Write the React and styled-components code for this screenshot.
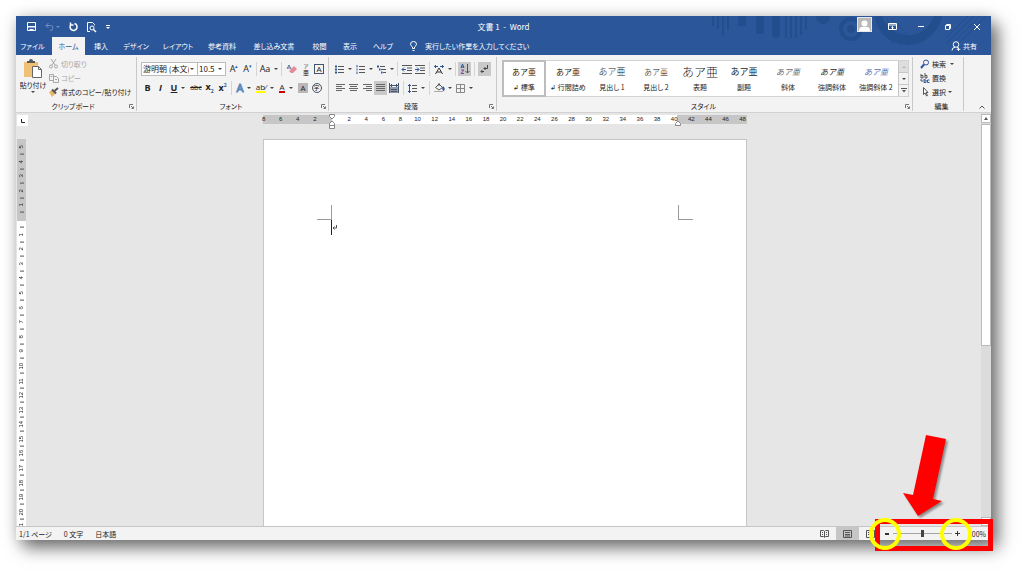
import React from "react";
import styled, { createGlobalStyle, css } from "styled-components";

const GlobalStyle = createGlobalStyle`
  * { box-sizing: border-box; }
  body { margin: 0; background: #fff; }
  button, input, select { font: inherit; color: inherit; margin: 0; padding: 0; border: 0; background: none; }
  svg { display: block; flex: none; overflow: visible; }
`;

const Stage = styled.div`
  min-height: 100vh;
  padding: 16px 33px 33px 16px;
  display: flex;
  overflow: hidden;
  font: 7px/10px "Noto Sans CJK JP", "Noto Sans", sans-serif;
  font-feature-settings: "palt";
  color: #222;
  -webkit-font-smoothing: antialiased;
`;
const Win = styled.div`
  position: relative;
  flex: 1;
  min-width: 0;
  display: flex;
  flex-direction: column;
  background: #e6e6e6;
  box-shadow: 7px 8px 16px rgba(0, 0, 0, 0.55), 0 0 14px rgba(0, 0, 0, 0.14);
`;

/* header */
const Header = styled.header`
  position: relative;
  background: #2b579a;
  color: #fff;
`;
const Decor = styled.div`
  position: absolute;
  inset: 0;
  overflow: hidden;
  display: flex;
  justify-content: flex-end;
`;
const TitleBar = styled.div`
  position: relative;
  display: grid;
  grid-template-columns: 1fr auto 1fr;
  align-items: center;
  height: 21px;
`;
const Quick = styled.div`
  display: flex;
  align-items: center;
  gap: 9px;
  padding-left: 11px;
`;
const Title = styled.h1`
  margin: 0;
  font-size: 8px;
  font-weight: 400;
  white-space: nowrap;
`;
const WinButtons = styled.div`
  display: flex;
  justify-content: flex-end;
  align-items: center;
`;
const PlainButton = styled.button`
  display: flex;
  align-items: center;
  justify-content: center;
  gap: 2px;
  width: ${(p) => (p.$w ? p.$w + "px" : "auto")};
  white-space: nowrap;
`;
const Percent = styled(PlainButton)`
  width: 25px;
  justify-content: flex-end;
`;
const Avatar = styled.button`
  width: 15px;
  height: 15px;
  background: #b9b9b9;
  border: 1px solid #e8e8e8;
  display: flex;
  justify-content: center;
  align-items: flex-end;
  margin: -4px 3px 0 0;
`;
const TabBar = styled.nav`
  position: relative;
  display: flex;
  align-items: stretch;
  height: 18px;
`;
const Tab = styled.button`
  width: ${(p) => p.$w}px;
  white-space: nowrap;
  ${(p) => p.$first && css`margin-right: 3px;`}
  ${(p) => p.$active && css`background: #f3f3f3; color: #2b579a;`}
`;
const Tell = styled.label`
  display: flex;
  align-items: center;
  gap: 8px;
  padding-left: 10px;
  flex: 1;
  input { width: 160px; outline: 0; }
  input::placeholder { color: #fff; opacity: 1; }
`;
const Share = styled(PlainButton)`
  padding-right: 14px;
`;

/* ribbon */
const Ribbon = styled.div`
  display: flex;
  height: 58px;
  background: #f3f3f3;
  border-bottom: 1px solid #d2d2d2;
`;
const Group = styled.section`
  display: flex;
  flex-direction: column;
  margin: 2px 0 1px;
  padding: ${(p) => p.$pad || "0 2px 0 4px"};
  border-right: 1px solid #c8c8c8;
  ${(p) => (p.$w ? css`width: ${p.$w}px; flex: none;` : css`flex: 1; min-width: 0;`)}
`;
const GroupBody = styled.div`
  height: 44px;
  display: flex;
  flex-direction: ${(p) => (p.$rows ? "column" : "row")};
  padding-top: ${(p) => (p.$rows ? "5px" : "0")};
  gap: ${(p) => (p.$rows ? "5px" : "0")};
`;
const GroupLabel = styled.div`
  display: flex;
  align-items: center;
  height: 10px;
  span { flex: 1; text-align: center; }
`;
const Paste = styled.button`
  display: flex;
  flex-direction: column;
  align-items: center;
  gap: 1px;
  width: 32px;
  padding-top: 2px;
  white-space: nowrap;
`;
const List = styled.div`
  display: flex;
  flex-direction: column;
  align-items: flex-start;
`;
const ListItem = styled.button`
  display: flex;
  align-items: center;
  gap: 2px;
  height: 14px;
  white-space: nowrap;
  color: ${(p) => (p.$off ? "#a6a6a6" : "#222")};
`;
const ToolRow = styled.div`
  display: flex;
  align-items: center;
  height: 14px;
`;
const Tool = styled.button`
  display: flex;
  align-items: center;
  justify-content: center;
  gap: 4px;
  flex: none;
  width: ${(p) => p.$w || 13}px;
  height: 14px;
  font-size: 9px;
  font-family: "Open Sans", "Noto Sans", sans-serif;
  font-weight: ${(p) => (p.$bold ? 700 : 400)};
  font-style: ${(p) => (p.$italic ? "italic" : "normal")};
  background: ${(p) => (p.$on ? "#c9c9c9" : "transparent")};
  sup, sub { font-size: 5px; line-height: 5px; color: #2b579a; }
  u { text-underline-offset: 1px; }
  s { font-size: 7px; }
`;
const Sep = styled.i`
  flex: none;
  width: 1px;
  height: 14px;
  margin: 0 ${(p) => p.$m || 2}px;
  background: #d4d4d4;
`;
const Combo = styled.label`
  position: relative;
  display: flex;
  width: ${(p) => p.$w}px;
  height: 14px;
  border: 1px solid #bcbcbc;
  margin-right: ${(p) => (p.$last ? 1 : -1)}px;
  background: #fff;
  font-size: 8px;
  select { appearance: none; flex: 1; min-width: 0; outline: 0; padding: 0 8px 0 1px; overflow: hidden; }
  svg { position: absolute; right: 3px; top: 5px; }
`;
const Boxed = styled.span`
  width: 10px;
  height: 10px;
  line-height: 8px;
  font-size: 8px;
  text-align: center;
  border: 1px solid ${(p) => (p.$fill ? "#b8b8b8" : "#44546a")};
  background: ${(p) => (p.$fill ? "#b8b8b8" : "transparent")};
  border-radius: ${(p) => (p.$round ? "5px" : "0")};
  ${(p) => p.$round && css`font: 6px/8px "Noto Sans CJK JP", sans-serif;`}
`;
const Ink = styled.span`
  line-height: 8px;
  height: 10px;
  font-size: 8px;
  border-bottom: 2px solid ${(p) => p.$c};
`;
const OutlineA = styled.span`
  color: #fff;
  font-size: 11px;
  -webkit-text-stroke: 1px #5b87bd;
`;
const Ruby = styled.span`
  display: flex;
  flex-direction: column;
  align-items: center;
  font: 5px/6px "Noto Sans CJK JP", sans-serif;
  b { font-size: 6px; line-height: 7px; font-weight: 400; }
`;

const Gallery = styled.div`
  display: flex;
  height: 37px;
  margin-top: 3px;
  background: #fff;
  border: 1px solid #d2d2d2;
  border-left: 0;
  width: max-content;
`;
const StyleCard = styled.button`
  width: 44px;
  display: flex;
  flex-direction: column;
  align-items: center;
  justify-content: flex-end;
  padding-bottom: ${(p) => (p.$on ? 3 : 4)}px;
  margin: ${(p) => (p.$on ? "-1px 0" : "0")};
  border: ${(p) => (p.$on ? "2px solid #bdbdbd" : "0")};
  white-space: nowrap;
`;
const Sample = styled.span`
  font-size: ${(p) => p.$size || 8}px;
  line-height: 20px;
  font-weight: ${(p) => p.$weight || 400};
  font-style: ${(p) => (p.$italic ? "italic" : "normal")};
  color: ${(p) => p.$color || "#222"};
  font-feature-settings: normal;
`;
const Steps = styled.div`
  display: flex;
  flex-direction: column;
  width: 10px;
  border-left: 1px solid #c6c6c6;
  button { flex: 1; display: grid; place-items: center; background: #f3f3f3; }
  button + button { border-top: 1px solid #c6c6c6; }
  button:first-child { background: #dedede; }
`;
const Collapse = styled.div`
  width: 27px;
  display: flex;
  justify-content: center;
  align-items: flex-end;
  padding: 0 0 3px 9px;
`;

/* workspace */
const Work = styled.main`
  flex: 1;
  min-height: 0;
  display: flex;
`;
const LeftRail = styled.div`
  width: 12px;
  height: 0;
  min-height: 100%;
  overflow: hidden;
  padding: 2px 0 0 1px;
`;
const TabStop = styled.button`
  width: 11px;
  height: 11px;
  display: grid;
  place-items: center;
  background: #fff;
  margin-bottom: 13px;
`;
const VRuler = styled.div`
  width: 9px;
  height: 395px;
  padding-top: 1px;
  display: flex;
  flex-direction: column;
  background: linear-gradient(#c6c6c6 82px, #fff 82px);
`;
const VCell = styled.span`
  flex: 1;
  position: relative;
  display: flex;
  align-items: center;
  justify-content: center;
  writing-mode: vertical-rl;
  transform: rotate(180deg);
  font: 6px/9px "Liberation Sans", sans-serif;
  &::before {
    content: "";
    position: absolute;
    top: 0;
    left: 2px;
    width: 4px;
    height: 1px;
    background: #555;
  }
`;
const Canvas = styled.div`
  flex: 1;
  min-width: 0;
  height: 0;
  min-height: 100%;
  overflow: hidden;
  display: flex;
  flex-direction: column;
  align-items: center;
`;
const HRuler = styled.div`
  position: relative;
  flex: none;
  display: flex;
  width: 496px;
  height: 9px;
  margin: 2px 3px 15px 0;
  background: linear-gradient(90deg, transparent 8px, #c6c6c6 8px 77px, #fff 77px 422px, #c6c6c6 422px 492px, transparent 492px);
`;
const HCell = styled.span`
  flex: 1;
  display: flex;
  justify-content: center;
  font: 6px/9px "Liberation Sans", sans-serif;
`;
const Marker = styled.svg`
  position: absolute;
  top: -1px;
  left: ${(p) => p.$x}px;
`;
const Page = styled.article`
  flex: 1 0 auto;
  width: 484px;
  margin-left: 1px;
  padding: 65px 53px 0;
  background: #fff;
  border: 1px solid #c6c6c6;
  border-bottom: 0;
`;
const Marks = styled.div`
  display: flex;
  justify-content: space-between;
`;
const Corner = styled.i`
  width: 15px;
  height: 15px;
  border-bottom: 1px solid #9a9a9a;
  ${(p) => (p.$side === "left" ? css`border-right: 1px solid #9a9a9a;` : css`border-left: 1px solid #9a9a9a;`)}
`;
const Caret = styled.p`
  margin: 0 0 0 14px;
  height: 15px;
  border-left: 1px solid #222;
  padding: 5px 0 0 1px;
`;
const Scroll = styled.div`
  width: 10px;
  display: flex;
  flex-direction: column;
  padding: 1px 0 0;
  background: #dcdcdc;
  button { height: 9px; display: grid; place-items: center; background: #fff; border: 1px solid #bbb; }
`;
const Thumb = styled.div`
  height: 222px;
  margin: 1px 0 auto;
  background: #fff;
  border: 1px solid #bbb;
`;

/* status bar */
const Status = styled.footer`
  display: flex;
  align-items: center;
  height: 14px;
  padding: 0 5px 0 3px;
  background: #f3f3f3;
  border-top: 1px solid #c6c6c6;
  white-space: nowrap;
`;
const StatusInfo = styled.div`
  flex: 1;
  display: flex;
  gap: 12px;
`;
const View = styled.button`
  width: 23px;
  height: 13px;
  display: grid;
  place-items: center;
  background: ${(p) => (p.$on ? "#c6c6c6" : "transparent")};
`;
const Zoom = styled.div`
  display: flex;
  align-items: center;
  input {
    appearance: none;
    width: 59px;
    height: 9px;
    margin: 0 1px;
    background: linear-gradient(#a6a6a6, #a6a6a6) center / 100% 1px no-repeat;
  }
  input::-webkit-slider-thumb { appearance: none; width: 3px; height: 7px; background: #444; }
`;
const Callout = styled.svg`
  position: absolute;
  right: -2px;
  bottom: -11px;
  pointer-events: none;
`;

const Down = ({ c = "#444" }) => (
  <svg width="4" height="2" viewBox="0 0 4 2"><path d="M0 0h4L2 2z" fill={c} /></svg>
);
const Icon = ({ s = 10, w, children, c = "#555" }) => (
  <svg width={w || s} height={s} viewBox={`0 0 ${w || s} ${s}`} fill="none" stroke={c} strokeWidth="1">{children}</svg>
);
const Launcher = () => (
  <PlainButton aria-label="詳細">
    <Icon s={5} c="#777"><path d="M.5 4V.5H4M2 2l2.500 2.500M4.500 2.500v2h-2" /></Icon>
  </PlainButton>
);
const Lines = ({ rows }) => (
  <Icon w={9} s={8} c="#666">
    {rows.map(([a, b], i) => <path key={i} d={`M${a} ${i * 2 + 0.5}H${b}`} />)}
  </Icon>
);

const TABS = [
  ["ファイル", 33], ["ホーム", 33], ["挿入", 32], ["デザイン", 38], ["レイアウト", 46],
  ["参考資料", 42], ["差し込み文書", 62], ["校閲", 29], ["表示", 32], ["ヘルプ", 34],
];
const STYLES = [
  { name: "↲ 標準" },
  { name: "↲ 行間詰め" },
  { name: "見出し 1", size: 9, weight: 300 },
  { name: "見出し 2", weight: 300 },
  { name: "表題", size: 12, weight: 300 },
  { name: "副題", size: 9 },
  { name: "斜体", italic: true, color: "#666" },
  { name: "強調斜体", italic: true },
  { name: "強調斜体 2", italic: true, color: "#5470b0" },
];
const H_NUMS = [8, 6, 4, 2, "", ...Array.from({ length: 24 }, (_, i) => i * 2 + 2)];
const V_NUMS = [5, 4, 3, 2, 1, "", ...Array.from({ length: 21 }, (_, i) => i + 1)];

function TitleDecor() {
  return (
    <Decor>
      <svg width="285" height="39" viewBox="0 0 285 39" fill="none" stroke="#234e8e">
        <path strokeWidth="2" d="M7 0v10M12 0v13M17 0v20M22 0v14" />
        <path strokeWidth="8" d="M36 0v10M54 0v18" />
        <path strokeWidth="8" strokeLinecap="round" d="M36 0v6M54 0v14M70 0v18" />
        <path strokeWidth="2" d="M80 0v22M85 0v22M90 0v22M95 0v19M100 0v14" />
        <circle cx="117" cy="1" r="7" fill="#234e8e" stroke="none" />
        <circle cx="145" cy="13" r="10" strokeWidth="4" />
        <circle cx="145" cy="13" r="4" fill="#234e8e" stroke="none" />
        <path strokeWidth="8" d="M172 0a31 31 0 0 0 60 0" />
        <path strokeWidth="8" d="M178 14a31 31 0 0 0 54-14" />
        <path strokeWidth="1" d="M166 6l22 22M170 4l26 26M175 3l27 27M180 3l26 26M186 3l22 22" />
        <path strokeWidth="1" d="M240 22L262 0M240 28L268 0M244 30L274 0M250 30L280 0" />
      </svg>
    </Decor>
  );
}

function ClipboardGroup() {
  return (
    <Group $w={121} $pad="0 2px 0 1px">
      <GroupBody>
        <Paste>
          <svg width="18" height="20" viewBox="0 0 18 20">
            <path d="M0 3h14v15H0z" fill="#eec176" />
            <path d="M3 4V2h2q0-2 2-2t2 2h2v2z" fill="#595959" />
            <path d="M8.500 7.500h6l3 3v8h-9z" fill="#fff" stroke="#666" />
            <path d="M14.500 7.500v3h3" fill="none" stroke="#666" />
          </svg>
          <span>貼り付け</span>
          <Down />
        </Paste>
        <List>
          <ListItem $off>
            <Icon c="#a6a6a6"><path d="M2 0l4 6M7 0L3 6" /><circle cx="2" cy="7.500" r="1.500" /><circle cx="7" cy="7.500" r="1.500" /></Icon>
            切り取り
          </ListItem>
          <ListItem $off>
            <Icon c="#a6a6a6"><path d="M.5 1.500h4v6h-4zM4.500 3.500h3l2 2v4h-5zM6 6.500h2M1.500 3.500h2" /></Icon>
            コピー
          </ListItem>
          <ListItem>
            <Icon><path d="M0 5l3-2 3 4-3 3z" fill="#eab766" stroke="none" /><path d="M3 2.500l4 4" strokeWidth="2" /><path d="M5.500 4L9 1" strokeWidth="2" /></Icon>
            書式のコピー/貼り付け
          </ListItem>
        </List>
      </GroupBody>
      <GroupLabel><span>クリップボード</span><Launcher /></GroupLabel>
    </Group>
  );
}

function FontGroup() {
  return (
    <Group $w={192}>
      <GroupBody $rows>
        <ToolRow>
          <Combo $w={57}><select aria-label="フォント"><option>游明朝 (本文(</option></select><Down /></Combo>
          <Combo $w={30} $last><select aria-label="サイズ"><option>10.5</option></select><Down /></Combo>
          <Tool $w={14}><span>A<sup>▴</sup></span></Tool>
          <Tool><span>A<sup>▾</sup></span></Tool>
          <Sep />
          <Tool $w={20}>Aa<Down /></Tool>
          <Sep />
          <Tool $w={16}>
            <Icon><path d="M2 7l5-5 3 3-4 4H4z" fill="#e58b9b" stroke="none" /><path d="M0 5l2-4 2 4M1 4h2" stroke="#5b6f94" /></Icon>
          </Tool>
          <Tool $w={12}><Ruby>ア<b>亜</b></Ruby></Tool>
          <Tool $w={14}><Boxed>A</Boxed></Tool>
        </ToolRow>
        <ToolRow>
          <Tool $bold>B</Tool>
          <Tool $italic $bold>I</Tool>
          <Tool $bold $w={22}><u>U</u><Down /></Tool>
          <Tool $w={14}><s>abc</s></Tool>
          <Tool $bold><span>x<sub>2</sub></span></Tool>
          <Tool $bold><span>x<sup>2</sup></span></Tool>
          <Sep />
          <Tool $w={20}><OutlineA>A</OutlineA><Down /></Tool>
          <Tool $w={22}><Ink $c="#ffff00">ab⁄</Ink><Down /></Tool>
          <Tool $w={20}><Ink $c="#d00000">A</Ink><Down /></Tool>
          <Tool $w={14}><Boxed $fill>A</Boxed></Tool>
          <Tool><Boxed $round>字</Boxed></Tool>
        </ToolRow>
      </GroupBody>
      <GroupLabel><span>フォント</span><Launcher /></GroupLabel>
    </Group>
  );
}

function ParagraphGroup() {
  const bars = <path d="M3 1.500h6M3 4.500h6M3 7.500h6" />;
  return (
    <Group $w={168}>
      <GroupBody $rows>
        <ToolRow>
          <Tool $w={21}><Icon w={9} s={9}>{bars}<path d="M0 1.500h2M0 4.500h2M0 7.500h2" stroke="#2b579a" strokeWidth="2" /></Icon><Down /></Tool>
          <Tool $w={21}><Icon w={9} s={9}>{bars}<path d="M1 0v2.500M1 3.500v2M1 6.500V9" stroke="#2b579a" /></Icon><Down /></Tool>
          <Tool $w={20}><Icon w={9} s={9}><path d="M3 1.500h5M4 4.500h5M6 7.500h3" /><path d="M0 1.500h2M2 4.500h1.500M4 7.500h1.500" stroke="#2b579a" strokeWidth="2" /></Icon><Down /></Tool>
          <Sep />
          <Tool><Icon w={10} s={9}><path d="M0 .5h10M5 3h5M5 5.500h5M0 8.500h10" /><path d="M4 4.500H0M2 2.500l-2 2 2 2" stroke="#2b579a" /></Icon></Tool>
          <Tool><Icon w={10} s={9}><path d="M0 .5h10M5 3h5M5 5.500h5M0 8.500h10" /><path d="M0 4.500h4M2 2.500l2 2-2 2" stroke="#2b579a" /></Icon></Tool>
          <Sep $m={3} />
          <Tool $w={20}><Icon w={10} s={9}><path d="M1.500 9L5 3l3.500 6M3 7h4" stroke="#333" /><path d="M0 1.500h4M6 1.500h4M2 0L.5 1.500 2 3M8 0l1.500 1.500L8 3" stroke="#2b579a" /></Icon><Down /></Tool>
          <Sep />
          <Tool $on><Icon w={10} s={10}><path d="M1 4l1.500-4L4 4M1 3h3" stroke="#2b579a" /><path d="M1 6h3L1 9.500h3" stroke="#7d4f9e" /><path d="M7.500 0v9M5.500 7l2 2 2-2" /></Icon></Tool>
          <Sep $m={3} />
          <Tool $on><Icon w={9} s={9}><path d="M7.500 0v3.500H4M5.500 2L4 3.500 5.500 5" stroke="#444" /><path d="M4 6.500H1M2.500 5L1 6.500 2.500 8" stroke="#444" /></Icon></Tool>
        </ToolRow>
        <ToolRow>
          <Tool $w={14}><Lines rows={[[0, 9], [0, 6], [0, 9], [0, 6]]} /></Tool>
          <Tool><Lines rows={[[0, 9], [1, 8], [0, 9], [1, 8]]} /></Tool>
          <Tool $w={14}><Lines rows={[[0, 9], [3, 9], [0, 9], [3, 9]]} /></Tool>
          <Tool $on><Lines rows={[[0, 9], [0, 9], [0, 9], [0, 9]]} /></Tool>
          <Tool $w={14}><Icon w={10} s={10}><path d="M1 4h8v6H1z" fill="#8c9bb0" stroke="none" /><path d="M.5 0v10M9.500 0v10M1 2.500h8M3 1L1.500 2.500 3 4M7 1l1.500 1.500L7 4" stroke="#44546a" /><path d="M2 6.500h6M2 8.500h6" /></Icon></Tool>
          <Sep />
          <Tool $w={20}><Icon w={9} s={9}><path d="M4 1.500h5M4 4.500h5M4 7.500h5" /><path d="M1.500 0v9M0 2L1.500.5 3 2M0 7l1.500 1.500L3 7" stroke="#2b579a" /></Icon><Down /></Tool>
          <Sep $m={3} />
          <Tool $w={20}><Icon w={10} s={10}><path d="M1.500 4.500L5 1l3.500 3.500L5 7zM5 0v3" /><path d="M8.500 4q2 2 .5 3.500" stroke="#2b579a" strokeWidth="2" /><path d="M0 8.500h9" stroke="#aaa" /></Icon><Down /></Tool>
          <Tool $w={22}><Icon w={9} s={9} c="#888"><path d="M.5.5h8v8h-8zM4.500 0v9M0 4.500h9" /></Icon><Down /></Tool>
        </ToolRow>
      </GroupBody>
      <GroupLabel><span>段落</span><Launcher /></GroupLabel>
    </Group>
  );
}

function StylesGroup() {
  return (
    <Group $pad="0 2px 0 5px">
      <GroupBody>
        <Gallery>
          {STYLES.map((s, i) => (
            <StyleCard key={s.name} $on={i === 0}>
              <Sample $size={s.size} $weight={s.weight} $italic={s.italic} $color={s.color}>あア亜</Sample>
              <span>{s.name}</span>
            </StyleCard>
          ))}
          <Steps>
            <button aria-label="上へ"><Icon w={4} s={2}><path d="M0 2h4L2 0z" fill="#bbb" stroke="none" /></Icon></button>
            <button aria-label="下へ"><Down /></button>
            <button aria-label="その他"><Icon w={6} s={5}><path d="M0 .5h6" /><path d="M1 2h4L3 4.500z" fill="#555" stroke="none" /></Icon></button>
          </Steps>
        </Gallery>
      </GroupBody>
      <GroupLabel><span>スタイル</span><Launcher /></GroupLabel>
    </Group>
  );
}

function EditGroup() {
  return (
    <Group $w={51} $pad="0 0 0 7px">
      <GroupBody>
        <List>
          <ListItem><Icon c="#2b579a"><circle cx="6" cy="3.500" r="2.500" /><path d="M4 5.500L1 9" strokeWidth="2" /></Icon>検索&nbsp;<Down /></ListItem>
          <ListItem><Icon><path d="M1 1v4h2V2.500H1M5 0v5h2V2.500H5" /><path d="M4 6v3.500h2V7H4M9.500 7H7.500v2.500h2" stroke="#2b579a" /><path d="M1 6v2h2" /></Icon>置換</ListItem>
          <ListItem><Icon><path d="M3.500.5v7l1.500-1.500 1.500 3 1-.5-1.500-3h2z" fill="#fff" /></Icon>選択<Down /></ListItem>
        </List>
      </GroupBody>
      <GroupLabel><span>編集</span></GroupLabel>
    </Group>
  );
}

export default function App() {
  return (
    <Stage lang="ja">
      <GlobalStyle />
      <Win>
        <Header>
          <TitleDecor />
          <TitleBar>
            <Quick>
              <PlainButton aria-label="上書き保存"><Icon s={9} c="#fff"><path d="M.5.5h8v8h-8z" /><path d="M1 4h7v1.500H1zM2.500 7h4v2h-4z" fill="#fff" stroke="none" /></Icon></PlainButton>
              <PlainButton aria-label="元に戻す"><Icon s={9} c="#6f90c4"><path d="M3.500 1L1 3.500 3.500 6M1 3.500h4.500q2.500 0 2.500 2.500T5 8.500" /></Icon><Down c="#6f90c4" /></PlainButton>
              <PlainButton aria-label="やり直し"><Icon s={9} c="#fff"><path d="M5.500 1.500A3.500 3.500 0 1 1 2 2.500M1.500 .5v2.500h3" strokeWidth="1.500" /></Icon></PlainButton>
              <PlainButton aria-label="印刷プレビュー"><Icon s={10} c="#fff"><path d="M3 9.500H.5v-9h5l2 2v1" /><circle cx="5" cy="6" r="2" /><path d="M6.500 7.500l2.500 2.500" strokeWidth="1.500" /></Icon></PlainButton>
              <PlainButton aria-label="カスタマイズ"><Icon w={4} s={4} c="#fff"><path d="M0 .5h4" /><path d="M0 2h4L2 4z" fill="#fff" stroke="none" /></Icon></PlainButton>
            </Quick>
            <Title>文書 1&nbsp; -&nbsp; Word</Title>
            <WinButtons>
              <Avatar aria-label="アカウント"><Icon w={11} s={12}><circle cx="5.500" cy="4.500" r="3" fill="#fff" stroke="none" /><path d="M0 12q0-4 3-4h5q3 0 3 4z" fill="#fff" stroke="none" /></Icon></Avatar>
              <PlainButton $w={34} aria-label="リボンの表示オプション"><Icon w={9} s={7} c="#fff"><path d="M.5.5h8v6h-8zM1 2h7M4.500 6V3.500M3.500 4.500l1-1 1 1" /></Icon></PlainButton>
              <PlainButton $w={24} aria-label="最小化"><Icon w={6} s={1} c="#fff"><path d="M0 .5h6" /></Icon></PlainButton>
              <PlainButton $w={30} aria-label="元のサイズに戻す"><Icon s={6} c="#fff"><path d="M.5 1.500h4v4h-4zM1.500 1.500v-1h4v4h-1" /></Icon></PlainButton>
              <PlainButton $w={28} aria-label="閉じる"><Icon s={6} c="#fff"><path d="M0 0l6 6M6 0L0 6" /></Icon></PlainButton>
            </WinButtons>
          </TitleBar>
          <TabBar>
            {TABS.map(([t, w], i) => <Tab key={t} $w={w} $first={i === 0} $active={i === 1}>{t}</Tab>)}
            <Tell>
              <Icon w={7} s={10} c="#fff"><path d="M2.500 7.500V6Q.5 4.500.5 3.300a3 2.800 0 0 1 6 0Q6.500 4.500 4.500 6v1.500zM2.500 9.500h2" /></Icon>
              <input placeholder="実行したい作業を入力してください" aria-label="操作アシスト" />
            </Tell>
            <Share><Icon s={10} c="#fff"><circle cx="5" cy="3.500" r="2.800" /><path d="M1 9.500Q1 6.500 4 6.300M6 6.300l2 1.500M7.500 6.500v3.500M5.800 8.300h3.500" /></Icon>共有</Share>
          </TabBar>
        </Header>

        <Ribbon>
          <ClipboardGroup />
          <FontGroup />
          <ParagraphGroup />
          <StylesGroup />
          <EditGroup />
          <Collapse><PlainButton aria-label="リボンを折りたたむ"><Icon w={6} s={4}><path d="M.5 3.500L3 1l2.500 2.500" /></Icon></PlainButton></Collapse>
        </Ribbon>

        <Work>
          <LeftRail>
            <TabStop aria-label="タブ"><Icon s={4} c="#222"><path d="M.5 0v3.500H4" /></Icon></TabStop>
            <VRuler>{V_NUMS.map((n, i) => <VCell key={i}>{n}</VCell>)}</VRuler>
          </LeftRail>
          <Canvas>
            <HRuler>
              {H_NUMS.map((n, i) => <HCell key={i}>{n}</HCell>)}
              <Marker $x={74} width="6" height="15" fill="#fff" stroke="#888"><path d="M.5.5h5v2L3 5 .5 2.500zM.5 14.500v-5L3 7l2.500 2.500v5zM.5 11.500h5" /></Marker>
              <Marker $x={420} width="6" height="15" fill="#fff" stroke="#888"><path d="M.5 11.500v-2L3 7l2.500 2.500v2z" /></Marker>
            </HRuler>
            <Page>
              <Marks><Corner $side="left" /><Corner $side="right" /></Marks>
              <Caret><Icon w={4} s={5}><path d="M3.500 0v3H0M1.500 1.500L0 3l1.500 1.500" /></Icon></Caret>
            </Page>
          </Canvas>
          <Scroll>
            <button aria-label="上へスクロール"><Icon w={4} s={3}><path d="M0 3h4L2 0z" fill="#555" stroke="none" /></Icon></button>
            <Thumb />
            <button aria-label="下へスクロール"><Down /></button>
          </Scroll>
        </Work>

        <Status>
          <StatusInfo>
            <span>1/1 ページ</span>
            <span>0 文字</span>
            <span>日本語</span>
          </StatusInfo>
          <View aria-label="閲覧モード"><Icon w={9} s={8}><path d="M.5.5h3l1 1 1-1h3v6h-3l-1 1-1-1h-3zM4.500 1v6M2 2.500h1M2 4.500h1M6 2.500h1M6 4.500h1" /></Icon></View>
          <View $on aria-label="印刷レイアウト"><Icon w={9} s={8}><path d="M.5.5h8v7h-8zM2 2.500h5M2 4.500h5M2 6h5" /></Icon></View>
          <View aria-label="Web レイアウト"><Icon w={9} s={8}><path d="M.5.5h8v7h-8zM2 2.500h5M2 4.500h3" /></Icon></View>
          <Zoom>
            <PlainButton $w={10} aria-label="縮小"><Icon w={4} s={4} c="#333"><path d="M0 2h4" strokeWidth="2" /></Icon></PlainButton>
            <input type="range" aria-label="ズーム" min="10" max="190" defaultValue="100" />
            <PlainButton $w={8} aria-label="拡大"><Icon w={5} s={5} c="#333"><path d="M0 2.500h5M2.500 0v5" /></Icon></PlainButton>
            <Percent>100%</Percent>
          </Zoom>
        </Status>

        <Callout width="124" height="118" viewBox="0 0 124 118" fill="none">
          <rect x="8.500" y="88.500" width="113" height="27" stroke="#f00" strokeWidth="5" />
          <path d="M57 2l20 4-13 60 9 2-24 15L34 60l10 2z" fill="#f00" filter="drop-shadow(2px 2px 1px rgba(0,0,0,.4))" />
          <circle cx="16" cy="101" r="14" stroke="#ff0" strokeWidth="4" />
          <circle cx="87" cy="101" r="14" stroke="#ff0" strokeWidth="4" />
        </Callout>
      </Win>
    </Stage>
  );
}
